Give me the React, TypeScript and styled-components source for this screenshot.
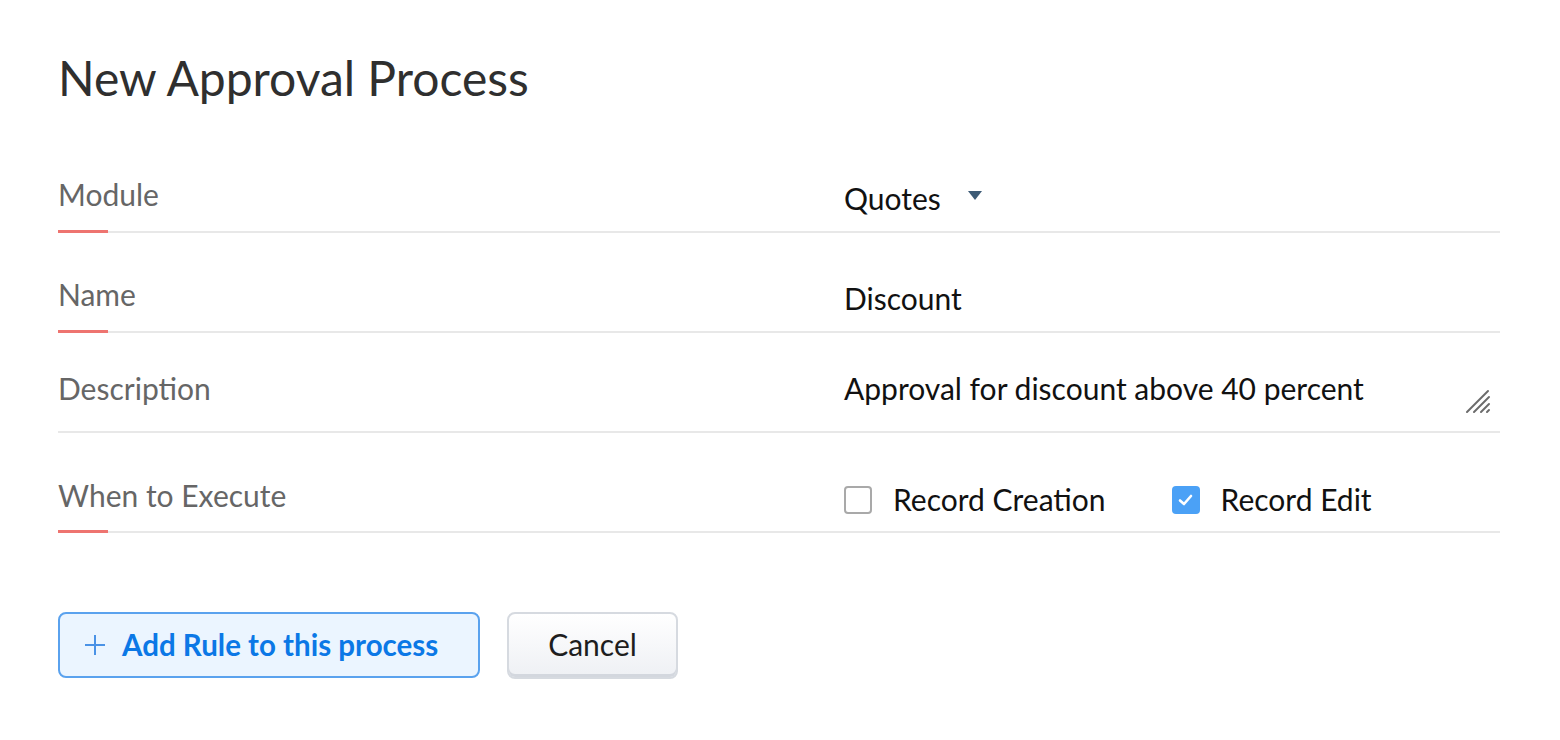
import React from 'react';
import styled, { createGlobalStyle } from 'styled-components';

const GlobalStyle = createGlobalStyle`
    body {
        margin: 0;
        background: #ffffff;
        font-family: Lato, "Noto Sans", sans-serif;
    }
`
const Page = styled.div`
    display: flex;
    flex-direction: column;
    padding: 49px 60px 0 58px;
    width: 1560px;
    box-sizing: border-box;
`
const Title = styled.h1`
    margin: 0 0 26px 0;
    font-size: 48px;
    line-height: 1.2;
    font-weight: 400;
    color: #2f2f2f;
`
const Form = styled.div`
    display: flex;
    flex-direction: column;
`
const Row = styled.div`
    position: relative;
    display: grid;
    grid-template-columns: 786px 1fr;
    align-items: end;
    height: 100px;
    box-sizing: border-box;
    border-bottom: 2px solid #e8e8e8;
`
const Mandatory = styled.span`
    position: absolute;
    left: 0;
    bottom: -2px;
    width: 50px;
    height: 3px;
    background: #ee7470;
`
const Label = styled.div<{ $pad: number }>`
    font-size: 30px;
    line-height: 1.2;
    color: #666666;
    padding-bottom: ${p => p.$pad}px;
`
const Value = styled.div<{ $pad: number }>`
    display: flex;
    align-items: center;
    font-size: 30px;
    line-height: 1.2;
    color: #111111;
    padding-bottom: ${p => p.$pad}px;
`
const Caret = styled.span`
    width: 0;
    height: 0;
    margin-left: 27px;
    margin-bottom: 4px;
    border-left: 7px solid transparent;
    border-right: 7px solid transparent;
    border-top: 9px solid #3d5b76;
`
const TextArea = styled.div`
    position: relative;
    flex: 1;
    height: 52px;
    padding-top: 5px;
    box-sizing: border-box;
`
const Grip = styled.svg`
    position: absolute;
    right: 8px;
    bottom: 2px;
`
const Check = styled.label`
    display: flex;
    align-items: center;
    gap: 21px;
    margin-right: 66px;
`
const Box = styled.span<{ $on?: boolean }>`
    display: flex;
    align-items: center;
    justify-content: center;
    width: 28px;
    height: 28px;
    margin-top: 2px;
    box-sizing: border-box;
    border-radius: 4px;
    border: ${p => (p.$on ? '0' : '2px solid #a9a9a9')};
    background: ${p => (p.$on ? '#4ba1f6' : '#ffffff')};
`
const Actions = styled.div`
    display: flex;
    gap: 27px;
    margin-top: 79px;
    align-items: flex-start;
`
const PrimaryButton = styled.button`
    display: flex;
    align-items: center;
    gap: 16px;
    width: 422px;
    height: 66px;
    padding: 0 0 0 24px;
    box-sizing: border-box;
    border: 2px solid #5aa2ee;
    border-radius: 8px;
    background: #ebf5ff;
    color: #0b78e6;
    font-family: Lato, sans-serif;
    font-size: 29.5px;
    font-weight: 700;
`
const CancelButton = styled.button`
    width: 171px;
    height: 67px;
    box-sizing: border-box;
    border: 2px solid #d6dae0;
    border-radius: 8px;
    background: linear-gradient(#ffffff, #eef0f4);
    box-shadow: inset 0 -3px 0 #d3d7de;
    color: #1e1e1e;
    font-family: Lato, sans-serif;
    font-size: 30px;
    font-weight: 400;
    padding-bottom: 3px;
`

const App = () => {
    return (
        <Page>
            <GlobalStyle />
            <Title>New Approval Process</Title>
            <Form>
                <Row>
                    <Mandatory />
                    <Label $pad={19}>Module</Label>
                    <Value $pad={15}>Quotes<Caret /></Value>
                </Row>
                <Row>
                    <Mandatory />
                    <Label $pad={19}>Name</Label>
                    <Value $pad={15}>Discount</Value>
                </Row>
                <Row>
                    <Label $pad={25}>Description</Label>
                    <Value $pad={14}>
                        <TextArea>
                            Approval for discount above 40 percent
                            <Grip width="28" height="26" viewBox="0 0 28 26">
                                <g stroke="#6b6b6b" strokeWidth="2" strokeLinecap="round">
                                    <line x1="3" y1="23" x2="24" y2="2" />
                                    <line x1="10" y1="23" x2="25" y2="8" />
                                    <line x1="17" y1="23" x2="25" y2="15" />
                                    <line x1="23" y1="23" x2="25" y2="21" />
                                </g>
                            </Grip>
                        </TextArea>
                    </Value>
                </Row>
                <Row>
                    <Mandatory />
                    <Label $pad={18}>When to Execute</Label>
                    <Value $pad={14}>
                        <Check>
                            <Box />
                            Record Creation
                        </Check>
                        <Check>
                            <Box $on>
                                <svg width="15" height="12" viewBox="0 0 15 12">
                                    <path d="M2 6.5 L6 10 L13 2" fill="none" stroke="#ffffff" strokeWidth="2.6" strokeLinecap="round" strokeLinejoin="round" />
                                </svg>
                            </Box>
                            Record Edit
                        </Check>
                    </Value>
                </Row>
            </Form>
            <Actions>
                <PrimaryButton>
                    <svg width="22" height="22" viewBox="0 0 22 22">
                        <path d="M11 1 V21 M1 11 H21" stroke="#4a92e6" strokeWidth="2" />
                    </svg>
                    Add Rule to this process
                </PrimaryButton>
                <CancelButton>Cancel</CancelButton>
            </Actions>
        </Page>
    )
}

export default App
